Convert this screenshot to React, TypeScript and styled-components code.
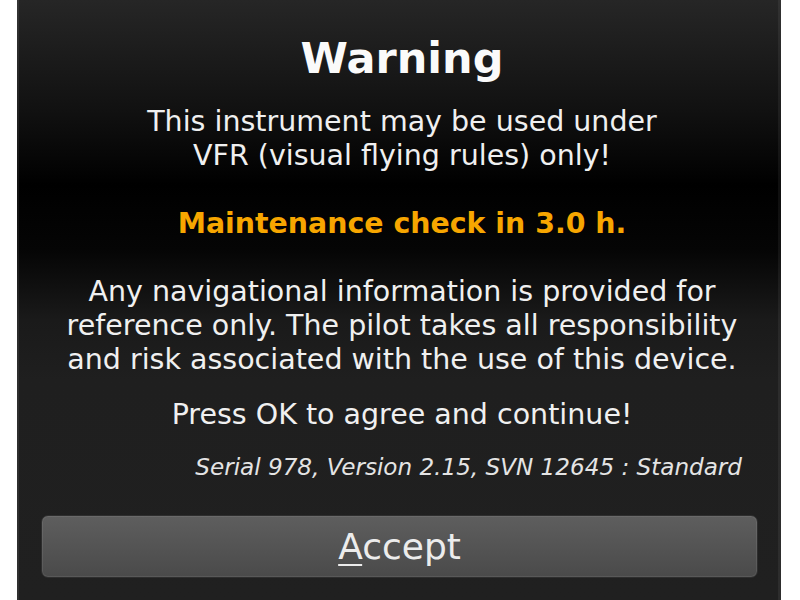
import styled, { createGlobalStyle } from 'styled-components';

const GlobalStyle = createGlobalStyle`
    html, body {
        margin: 0;
        padding: 0;
        background: #ffffff;
    }
    body {
        font-family: "DejaVu Sans", "Liberation Sans", sans-serif;
    }
`;

export default function App() {
    return (
        <>
            <GlobalStyle />
            <DialogPanel>
                <Content>
                    <Title>Warning</Title>
                    <Message>
                        This instrument may be used under
                        <br />
                        VFR (visual flying rules) only!
                    </Message>
                    <Notice>Maintenance check in 3.0 h.</Notice>
                    <Message $gap={34}>
                        Any navigational information is provided for
                        <br />
                        reference only. The pilot takes all responsibility
                        <br />
                        and risk associated with the use of this device.
                    </Message>
                    <Message $gap={21}>Press OK to agree and continue!</Message>
                    <VersionInfo>Serial 978, Version 2.15, SVN 12645 : Standard</VersionInfo>
                </Content>
                <ButtonRow>
                    <AcceptButton>
                        <Mnemonic>A</Mnemonic>ccept
                    </AcceptButton>
                </ButtonRow>
            </DialogPanel>
        </>
    );
}

const DialogPanel = styled.div`
    width: 764px;
    height: 600px;
    margin-left: 17px;
    display: flex;
    flex-direction: column;
    box-sizing: border-box;
    background: linear-gradient(
        to bottom,
        #262626 0px,
        #111111 110px,
        #000000 185px,
        #050505 250px,
        #1a1a1a 320px,
        #1f1f1f 380px,
        #202020 600px
    );
    box-shadow: inset 2px 0 0 rgba(255, 255, 255, 0.07), inset -3px 0 0 rgba(255, 255, 255, 0.06);
`;

const Content = styled.div`
    display: flex;
    flex-direction: column;
    align-items: center;
    padding: 33px 39px 0 45px;
`;

const Title = styled.h1`
    margin: 0;
    font-size: 43px;
    line-height: 50px;
    font-weight: bold;
    color: #fafafa;
`;

const Message = styled.p<{ $gap?: number }>`
    margin: ${(p) => p.$gap ?? 22}px 0 0;
    font-size: 28.5px;
    line-height: 34px;
    color: #f0f0f0;
    text-align: center;
    white-space: nowrap;
`;

const Notice = styled.p`
    margin: 34px 0 0;
    font-size: 28.4px;
    line-height: 34px;
    font-weight: bold;
    color: #f7a600;
    text-align: center;
`;

const VersionInfo = styled.div`
    align-self: stretch;
    margin-top: 21px;
    font-size: 23.1px;
    line-height: 28px;
    font-style: italic;
    color: #e4e4e4;
    text-align: right;
    white-space: nowrap;
`;

const ButtonRow = styled.div`
    display: flex;
    padding: 34px 23px 0 24px;
`;

const AcceptButton = styled.button`
    flex: 1;
    height: 63px;
    padding: 0;
    border: 1px solid #2e2e2e;
    border-radius: 7px;
    background: linear-gradient(to bottom, #5e5e5e, #4a4a4a);
    box-shadow: inset 0 0 0 1px rgba(255, 255, 255, 0.08);
    font-family: "DejaVu Sans", "Liberation Sans", sans-serif;
    font-size: 36px;
    line-height: 61px;
    color: #ececec;
    text-align: center;
`;

const Mnemonic = styled.span`
    text-decoration: underline;
    text-underline-offset: 5px;
    text-decoration-thickness: 2px;
`;
